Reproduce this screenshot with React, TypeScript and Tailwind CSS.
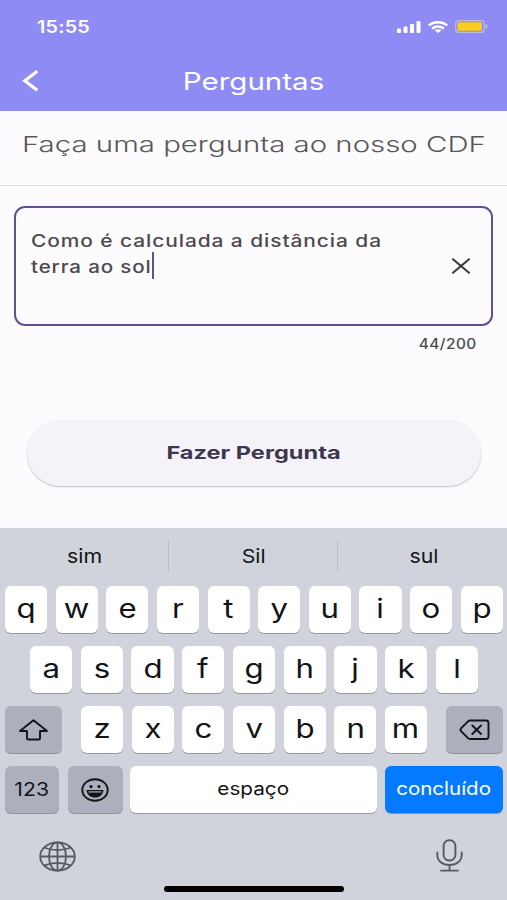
import type { ReactNode } from "react";

const SUGGESTIONS = ["sim", "Sil", "sul"];
const ROW_1 = ["q", "w", "e", "r", "t", "y", "u", "i", "o", "p"];
const ROW_2 = ["a", "s", "d", "f", "g", "h", "j", "k", "l"];
const ROW_3 = ["z", "x", "c", "v", "b", "n", "m"];

function StatusBar() {
  return (
    <div className="flex h-[53px] items-center justify-between pl-[37px] pr-[19px]">
      <span className="origin-left scale-x-[1.16] pt-px text-[17px] font-semibold leading-none tracking-[0.2px]">15:55</span>
      <div className="flex items-center">
        <svg className="mr-[7px] h-3 w-6" viewBox="0 0 24 12" fill="currentColor">
          <rect x="0" y="7.5" width="4" height="4.5" rx="1" />
          <rect x="6.5" y="5.5" width="4" height="6.5" rx="1" />
          <rect x="13" y="3" width="4" height="9" rx="1" />
          <rect x="19.5" y="0" width="4" height="12" rx="1" />
        </svg>
        <svg className="mr-[7px] h-3 w-5" viewBox="0 0 20 12" fill="none" stroke="currentColor" strokeWidth="2.5">
          <path d="M0.8 4.4C5.8 0.1 14.2 0.1 19.2 4.4" />
          <path d="M4.1 7.7C7.4 4.9 12.6 4.9 15.9 7.7" />
          <path d="M10 12L6.6 9.3C8.5 7.9 11.5 7.9 13.4 9.3Z" fill="currentColor" stroke="none" />
        </svg>
        <svg className="h-[13px] w-[33px]" viewBox="0 0 33 13">
          <rect x="0.6" y="0.6" width="28.8" height="11.8" rx="3.4" fill="none" stroke="#c0b9e4" strokeWidth="1.2" />
          <rect x="2.4" y="2.2" width="24.6" height="8.6" rx="1.6" fill="#fbcc1c" />
          <path d="M30.6 4C33.2 4.8 33.2 8.2 30.6 9Z" fill="#c0b9e4" />
        </svg>
      </div>
    </div>
  );
}

function Header() {
  return (
    <header className="h-[111px] bg-[#8f8bf5] text-white">
      <StatusBar />
      <div className="grid h-[57px] grid-cols-[60px_1fr_60px] items-center">
        <button className="pl-[22px]" aria-label="Voltar">
          <svg className="h-[23px] w-[17px]" viewBox="0 0 17 23" fill="none" stroke="currentColor" strokeWidth="3.2">
            <path d="M15.2 1.3L2.8 10.7L15.2 20.3" />
          </svg>
        </button>
        <h1 className="text-center text-2xl leading-none">
          <span className="inline-block scale-x-[1.23] font-normal">Perguntas</span>
        </h1>
      </div>
    </header>
  );
}

function QuestionForm() {
  return (
    <main className="h-[417px] bg-[#fdfbfd]">
      <div className="flex h-[75px] items-start border-b border-[#e6dce2] pl-[22px] pt-[19px]">
        <h2 className="origin-left scale-x-[1.335] whitespace-nowrap text-[22px] font-light leading-7 text-[#59565c]">
          Faça uma pergunta ao nosso CDF
        </h2>
      </div>

      <div className="mx-3.5 mt-5 flex h-[120px] items-center justify-between rounded-[11px] border-2 border-[#5e5391] pl-[15px] pr-[21px]">
        <div className="h-full pt-5 text-[17px] leading-[26px] text-[#4c494f]">
          <p className="w-max origin-left scale-x-[1.23] font-medium tracking-[0.75px]">Como é calculada a distância da</p>
          <p className="flex h-[26px] w-max items-center">
            <span className="w-[121px]">
              <span className="inline-block origin-left scale-x-[1.21] whitespace-nowrap font-medium tracking-[0.7px]">terra ao sol</span>
            </span>
            <span className="mb-1 h-[27px] w-0.5 shrink-0 bg-[#5e5391]" />
          </p>
        </div>
        <button aria-label="Limpar">
          <svg className="h-4 w-[18px]" viewBox="0 0 18 16" fill="none" stroke="#39363c" strokeWidth="2" strokeLinecap="round">
            <path d="M1 1.2L17 14.8M17 1.2L1 14.8" />
          </svg>
        </button>
      </div>
      <p className="mr-[30px] mt-2.5 flex justify-end text-sm leading-4 text-[#4c494f]">
        <span className="origin-right scale-x-[1.1] font-medium tracking-[0.4px]">44/200</span>
      </p>

      <button className="mx-[27px] mt-[68px] flex h-[66px] w-[454px] items-center justify-center rounded-full bg-[#f6f2f9] shadow-[0_1px_1.5px_rgba(80,65,85,0.32)]">
        <span className="scale-x-[1.31] pb-px text-[18px] font-bold text-[#3b384d]">Fazer Pergunta</span>
      </button>
    </main>
  );
}

function Key({ children }: { children: ReactNode }) {
  return (
    <button className="flex h-[47px] w-[42.2px] items-center justify-center rounded-[6px] bg-white pb-px text-[26px] leading-none shadow-[0_1px_0.5px_#9698a0]">
      <span className="scale-x-[1.2]">{children}</span>
    </button>
  );
}

function ShiftIcon() {
  return (
    <svg className="h-[22px] w-[30px]" viewBox="0 0 30 22" fill="none" stroke="currentColor" strokeWidth="1.9" strokeLinejoin="round">
      <path d="M14.5 1.3L28 12H21V19.2Q21 20.5 19.7 20.5H9.3Q8 20.5 8 19.2V12H1Z" />
    </svg>
  );
}

function DeleteIcon() {
  return (
    <svg className="h-[22px] w-[31px]" viewBox="0 0 31 22" fill="none" stroke="currentColor" strokeWidth="1.9" strokeLinecap="round" strokeLinejoin="round">
      <path d="M11 1.5H27Q29.5 1.5 29.5 4V17.5Q29.5 20 27 20H11Q9.8 20 9 19.2L2 12.2Q1 10.8 2 9.4L9 2.3Q9.8 1.5 11 1.5Z" />
      <path d="M13.3 6.5L22 15M22 6.5L13.3 15" />
    </svg>
  );
}

function EmojiIcon() {
  return (
    <svg className="h-6 w-7" viewBox="0 0 28 24" fill="none" stroke="currentColor">
      <ellipse cx="14" cy="12" rx="12.7" ry="10.8" strokeWidth="1.9" />
      <ellipse cx="10" cy="8.6" rx="1.6" ry="1.7" fill="currentColor" stroke="none" />
      <ellipse cx="18" cy="8.6" rx="1.6" ry="1.7" fill="currentColor" stroke="none" />
      <path d="M5.5 12H22.5C22 17 18.5 19.5 14 19.5S6 17 5.5 12Z" fill="currentColor" stroke="none" />
      <path d="M7.5 13.9H20.5" stroke="#abb0bc" strokeWidth="1.2" />
    </svg>
  );
}

function GlobeIcon() {
  return (
    <svg className="h-[31px] w-[37px]" viewBox="0 0 37 31" fill="none" stroke="currentColor" strokeWidth="1.8">
      <ellipse cx="18.5" cy="15.5" rx="17.3" ry="14.2" />
      <ellipse cx="18.5" cy="15.5" rx="8.5" ry="14.2" />
      <path d="M18.5 1.2V29.8M1 15.5H36" />
      <path d="M5.2 6.5C13 10 24 10 31.8 6.5M5.2 24.5C13 21 24 21 31.8 24.5" />
    </svg>
  );
}

function MicIcon() {
  return (
    <svg className="h-[33px] w-[27px]" viewBox="0 0 27 33" fill="none" stroke="currentColor" strokeWidth="1.9" strokeLinecap="round">
      <rect x="7.6" y="1.2" width="11.8" height="20.3" rx="5.5" />
      <path d="M1.3 13.5V16C1.3 22 6.5 26 13.5 26S25.7 22 25.7 16V13.5M13.5 26V31.6M5 31.6H22" />
    </svg>
  );
}

function Keyboard() {
  return (
    <section className="h-[372px] bg-[#d0d3dc] text-[#131417]">
      <div className="grid h-[58px] grid-cols-[169px_169px_169px] divide-x divide-[#b9bcc6] pt-[13px]">
        {SUGGESTIONS.map((word) => (
          <div key={word} className="flex h-[30px] items-center justify-center pl-0.5 pt-[3px] text-[19px]">
            <span className="scale-x-[1.12]">{word}</span>
          </div>
        ))}
      </div>

      <div className="flex flex-col gap-[13px] pl-[5px] pr-1">
        <div className="flex h-[47px] justify-between">
          {ROW_1.map((k) => <Key key={k}>{k}</Key>)}
        </div>
        <div className="flex h-[47px] justify-between px-[25px]">
          {ROW_2.map((k) => <Key key={k}>{k}</Key>)}
        </div>
        <div className="flex h-[47px] justify-between">
          <button className="flex w-[57px] items-center justify-center rounded-[6px] bg-[#abb0bc] shadow-[0_1px_0.5px_#8f929b]" aria-label="Shift">
            <ShiftIcon />
          </button>
          <div className="flex w-[346px] justify-between">
            {ROW_3.map((k) => <Key key={k}>{k}</Key>)}
          </div>
          <button className="flex w-[57px] items-center justify-center rounded-[6px] bg-[#abb0bc] shadow-[0_1px_0.5px_#8f929b]" aria-label="Apagar">
            <DeleteIcon />
          </button>
        </div>
        <div className="flex h-[47px] text-[18px]">
          <button className="mr-[8.5px] w-[54px] rounded-[6px] bg-[#abb0bc] shadow-[0_1px_0.5px_#8f929b]">
            <span className="inline-block scale-x-[1.18]">123</span>
          </button>
          <button className="mr-[7.5px] flex w-[55px] items-center justify-center rounded-[6px] bg-[#abb0bc] shadow-[0_1px_0.5px_#8f929b]" aria-label="Emoji">
            <EmojiIcon />
          </button>
          <button className="mr-2 flex-1 rounded-[6px] bg-white pb-[3px] shadow-[0_1px_0.5px_#9698a0]">
            <span className="inline-block scale-x-[1.15]">espaço</span>
          </button>
          <button className="flex w-[118px] items-center justify-center rounded-[6px] bg-[#067aff] pb-[3px] text-white shadow-[0_1px_0.5px_#8f929b]">
            <span className="scale-x-[1.14]">concluído</span>
          </button>
        </div>
      </div>

      <div className="flex h-[59px] items-end justify-between pl-[39px] pr-[44px] text-[#565a61]">
        <GlobeIcon />
        <MicIcon />
      </div>
      <div className="mx-auto mt-3.5 h-1.5 w-[180px] rounded-full bg-black" />
    </section>
  );
}

export default function App() {
  return (
    <div className="h-[900px] w-[507px] overflow-hidden font-['Inter',sans-serif]">
      <Header />
      <QuestionForm />
      <Keyboard />
    </div>
  );
}
